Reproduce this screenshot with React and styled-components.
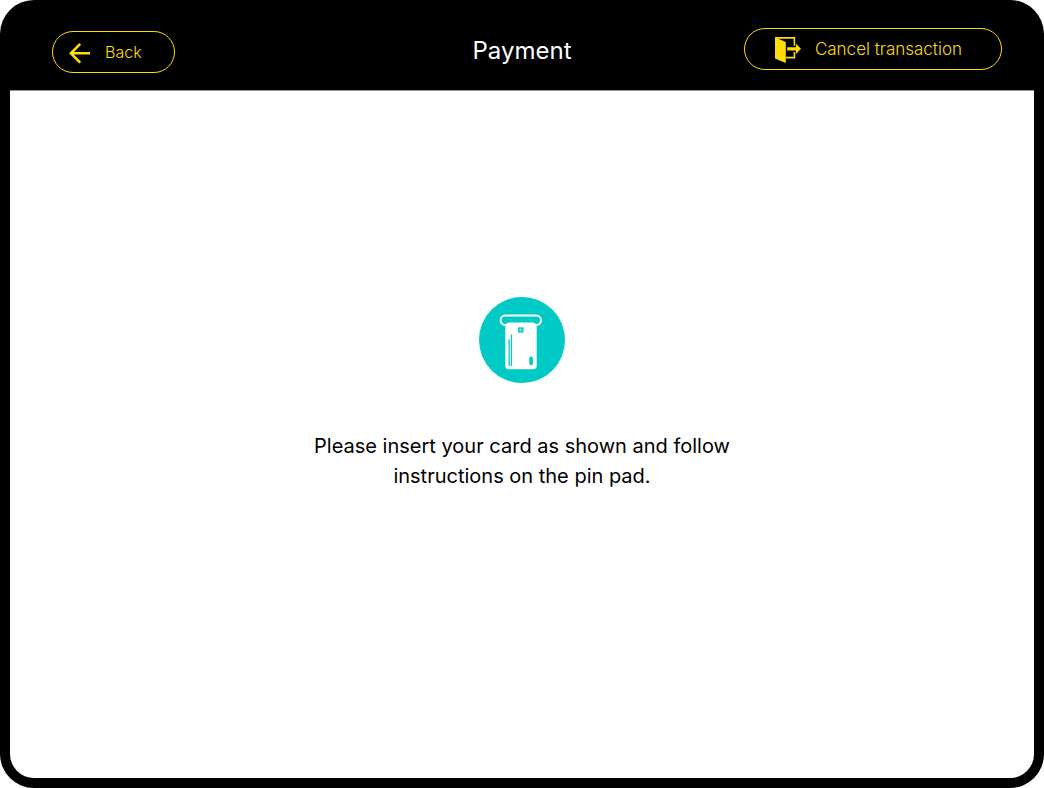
import React from "react";
import styled, { createGlobalStyle } from "styled-components";

const GlobalStyle = createGlobalStyle`
  *, *::before, *::after { box-sizing: border-box; }
  body {
    margin: 0;
    background: #ffffff;
    font-family: Inter, "Liberation Sans", sans-serif;
  }
`;

const Device = styled.div`
  display: flex;
  flex-direction: column;
  min-height: 100vh;
  padding: 10px;
  background: #000000;
  border-radius: 34px;
`;

const Header = styled.header`
  display: grid;
  grid-template-columns: 1fr auto 1fr;
  height: 81px;
  border-bottom: 1px solid #979797;
`;

const HeaderStart = styled.div`
  padding: 21px 0 0 42px;
`;

const HeaderEnd = styled.div`
  display: flex;
  justify-content: flex-end;
  align-items: flex-start;
  padding: 18px 32px 0 0;
`;

const Title = styled.h1`
  margin: 0;
  padding-top: 26px;
  font-size: 24px;
  font-weight: 400;
  line-height: 30px;
  color: #ffffff;
`;

const PillButton = styled.button`
  display: flex;
  align-items: center;
  gap: 14px;
  height: 42px;
  padding: ${({ $wide }) => ($wide ? "0 39px 0 30px" : "0 32px 0 16px")};
  border: 1px solid #ffdd00;
  border-radius: 21px;
  background: transparent;
  color: #ffdd00;
  font-family: inherit;
  font-size: ${({ $wide }) => ($wide ? "17px" : "16px")};
  font-weight: 300;
  line-height: 22px;
  white-space: nowrap;
  cursor: pointer;

  svg { flex: none; }
`;

const Content = styled.main`
  flex: 1;
  display: flex;
  flex-direction: column;
  align-items: center;
  padding: 206px 24px 24px;
  background: #ffffff;
  border-radius: 0 0 24px 24px;
`;

const Message = styled.p`
  max-width: 440px;
  margin: 48px 0 0;
  font-size: 20px;
  font-weight: 400;
  line-height: 30px;
  text-align: center;
  color: #000000;
`;

const BackArrow = () => (
  <svg width="22" height="24" viewBox="0 0 22 24" fill="none" stroke="currentColor" strokeWidth="2.6" aria-hidden="true">
    <path d="M11.2 3.8 1.9 13.3l9.3 9.3M1.9 13.3H21" />
  </svg>
);

const ExitDoor = () => (
  <svg width="26" height="30" viewBox="0 -1 26 30" fill="none" aria-hidden="true">
    <path d="M.2 2.9h19.2v7.9M19.4 17v5.6H11" stroke="currentColor" strokeWidth="1.6" />
    <path d="M0 2.2 10.8 7v21L0 23.4Z" fill="currentColor" />
    <path d="M12.2 12.2h8.8V8.7l5 5.1-5 5.1v-3.5h-8.8Z" fill="currentColor" />
  </svg>
);

const InsertCard = () => (
  <svg width="86" height="86" viewBox="0 0 86 86" role="img" aria-label="Insert card">
    <circle cx="43" cy="43" r="43" fill="#00c9c6" />
    <rect x="21.6" y="18.5" width="40.4" height="9.4" rx="4.7" fill="none" stroke="#fff" strokeWidth="2" />
    <path d="M26.3 30c0-2.2 1.3-3.8 3.5-4.4h24.4c2.2.6 3.5 2.2 3.5 4.4v38.8a3.4 3.4 0 0 1-3.4 3.4H29.7a3.4 3.4 0 0 1-3.4-3.4Z" fill="#fff" />
    <g fill="#00c9c6">
      <rect x="39" y="30.2" width="5.6" height="5.6" rx="1" />
      <rect x="29.5" y="42.5" width="1.3" height="26.5" />
      <rect x="31.8" y="37.5" width="1.3" height="31.5" />
      <rect x="50.3" y="59.4" width="3.6" height="9" rx="1.8" />
    </g>
    <path d="M41.8 30.2v5.6M39 33h5.6" stroke="#fff" strokeWidth=".4" />
  </svg>
);

export default function App() {
  return (
    <>
      <GlobalStyle />
      <Device>
        <Header>
          <HeaderStart>
            <PillButton type="button">
              <BackArrow />
              Back
            </PillButton>
          </HeaderStart>
          <Title>Payment</Title>
          <HeaderEnd>
            <PillButton type="button" $wide>
              <ExitDoor />
              Cancel transaction
            </PillButton>
          </HeaderEnd>
        </Header>
        <Content>
          <InsertCard />
          <Message>Please insert your card as shown and follow instructions on the pin pad.</Message>
        </Content>
      </Device>
    </>
  );
}
